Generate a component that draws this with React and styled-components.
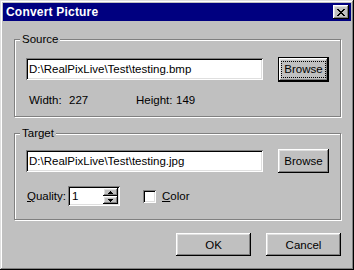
import React from 'react'
import styled, { createGlobalStyle, css } from 'styled-components'

const Global = createGlobalStyle`
  html, body { margin: 0; padding: 0; background: #c0c0c0; }
  body { font-family: "Liberation Sans", Arial, sans-serif; font-size: 11px; color: #000; }
`

const raised = css`
  box-shadow: inset -1px -1px #000, inset 1px 1px #fff, inset -2px -2px #808080, inset 2px 2px #dfdfdf;
`

const sunken = css`
  box-shadow: inset 1px 1px #808080, inset -1px -1px #fff, inset 2px 2px #000, inset -2px -2px #dfdfdf;
`

const Window = styled.div`
  width: 354px;
  height: 270px;
  box-sizing: border-box;
  padding: 3px;
  background: #c0c0c0;
  box-shadow: inset -1px -1px #000, inset 1px 1px #dfdfdf, inset -2px -2px #808080, inset 2px 2px #fff;
  display: flex;
  flex-direction: column;
`

const TitleBar = styled.div`
  height: 18px;
  background: #000080;
  display: flex;
  align-items: center;
  justify-content: space-between;
  padding: 0 2px 0 3px;
`

const Title = styled.span`
  color: #fff;
  font-weight: bold;
  font-size: 12px;
  letter-spacing: 0.2px;
`

const CloseButton = styled.div`
  width: 16px;
  height: 14px;
  background: #c0c0c0;
  ${raised};
  display: flex;
  align-items: center;
  justify-content: center;
`

const Body = styled.div`
  display: flex;
  flex-direction: column;
  padding: 18px 10px 0 11px;
`

const Group = styled.div`
  position: relative;
  height: ${p => p.$h}px;
  box-sizing: border-box;
  border: 1px solid #808080;
  box-shadow: inset 1px 1px #fff, 1px 1px #fff;
  padding: ${p => p.$top}px 11px 0 11px;
  margin-bottom: ${p => p.$mb}px;
`

const Legend = styled.span`
  position: absolute;
  top: -7px;
  left: 5px;
  padding: 0 2px;
  background: #c0c0c0;
  line-height: 13px;
  font-size: 11.5px;
`

const PathRow = styled.div`
  display: flex;
  align-items: center;
  height: 24px;
  gap: 15px;
`

const TextField = styled.div`
  width: ${p => p.$w}px;
  height: 22px;
  box-sizing: border-box;
  background: #fff;
  ${sunken};
  display: flex;
  align-items: center;
  padding: 0 3px;
  font-size: 11.5px;
  white-space: nowrap;
  overflow: hidden;
`

const Button = styled.div`
  width: ${p => p.$w}px;
  height: ${p => p.$h}px;
  box-sizing: border-box;
  background: #c0c0c0;
  display: flex;
  align-items: center;
  justify-content: center;
  font-size: 11.5px;
  ${p => p.$default
    ? css`
      border: 1px solid #000;
      ${raised};
    `
    : raised}
`

const FocusRing = styled.span`
  border: 1px dotted #000;
  padding: 1px 2px;
  line-height: 13px;
`

const InfoRow = styled.div`
  display: flex;
  margin-top: 13px;
  padding-left: 3px;
  line-height: 13px;
  font-size: 11.5px;
`

const Cell = styled.span`
  width: ${p => p.$w}px;
`

const OptionsRow = styled.div`
  display: flex;
  align-items: center;
  margin-top: 13px;
  height: 20px;
  font-size: 11.5px;
`

const Label = styled.span`
  width: 41px;
  padding-left: 1px;
`

const Spin = styled.div`
  width: 52px;
  height: 20px;
  box-sizing: border-box;
  background: #fff;
  ${sunken};
  display: flex;
  align-items: stretch;
  padding: 2px;
`

const SpinValue = styled.span`
  flex: 1;
  padding-left: 2px;
  display: flex;
  align-items: center;
`

const SpinButtons = styled.div`
  width: 15px;
  display: flex;
  flex-direction: column;
`

const SpinButton = styled.div`
  flex: 1;
  background: #c0c0c0;
  ${raised};
  display: flex;
  align-items: center;
  justify-content: center;
`

const Check = styled.div`
  width: 13px;
  height: 13px;
  box-sizing: border-box;
  margin-left: 23px;
  background: #fff;
  ${sunken};
`

const CheckLabel = styled.span`
  margin-left: 6px;
`

const U = styled.span`
  text-decoration: underline;
`

const Footer = styled.div`
  display: flex;
  justify-content: flex-end;
  gap: 15px;
  margin-top: 13px;
`

const Arrow = ({ up }) => (
  <svg width="5" height="3" viewBox="0 0 5 3" shapeRendering="crispEdges">
    <path d={up ? 'M2 0h1v1h1v1h1v1H0V2h1V1h1z' : 'M0 0h5v1H4v1H3v1H2V2H1V1H0z'} fill="#000" />
  </svg>
)

const CloseGlyph = () => (
  <svg width="8" height="7" viewBox="0 0 8 7" shapeRendering="crispEdges">
    <path d="M0 0h2v1h1v1h2V1h1V0h2v1H7v1H6v1H5v1h1v1h1v1h1v1H6V6H5V5H3v1H2v1H0V6h1V5h1V4h1V3H2V2H1V1H0z" fill="#000" />
  </svg>
)

export default function App() {
  return (
    <>
      <Global />
      <Window>
        <TitleBar>
          <Title>Convert Picture</Title>
          <CloseButton><CloseGlyph /></CloseButton>
        </TitleBar>
        <Body>
          <Group $h={78} $top={17} $mb={16}>
            <Legend>Source</Legend>
            <PathRow>
              <TextField $w={237}>D:\RealPixLive\Test\testing.bmp</TextField>
              <Button $w={51} $h={25} $default>
                <FocusRing>Browse</FocusRing>
              </Button>
            </PathRow>
            <InfoRow>
              <Cell $w={40}>Width:</Cell>
              <Cell $w={67}>227</Cell>
              <Cell $w={40}>Height:</Cell>
              <Cell $w={40}>149</Cell>
            </InfoRow>
          </Group>
          <Group $h={87} $top={15} $mb={0}>
            <Legend>Target</Legend>
            <PathRow>
              <TextField $w={237}>D:\RealPixLive\Test\testing.jpg</TextField>
              <Button $w={51} $h={24}>Browse</Button>
            </PathRow>
            <OptionsRow>
              <Label><U>Q</U>uality:</Label>
              <Spin>
                <SpinValue>1</SpinValue>
                <SpinButtons>
                  <SpinButton><Arrow up /></SpinButton>
                  <SpinButton><Arrow /></SpinButton>
                </SpinButtons>
              </Spin>
              <Check />
              <CheckLabel><U>C</U>olor</CheckLabel>
            </OptionsRow>
          </Group>
          <Footer>
            <Button $w={75} $h={23}>OK</Button>
            <Button $w={75} $h={23}>Cancel</Button>
          </Footer>
        </Body>
      </Window>
    </>
  )
}
